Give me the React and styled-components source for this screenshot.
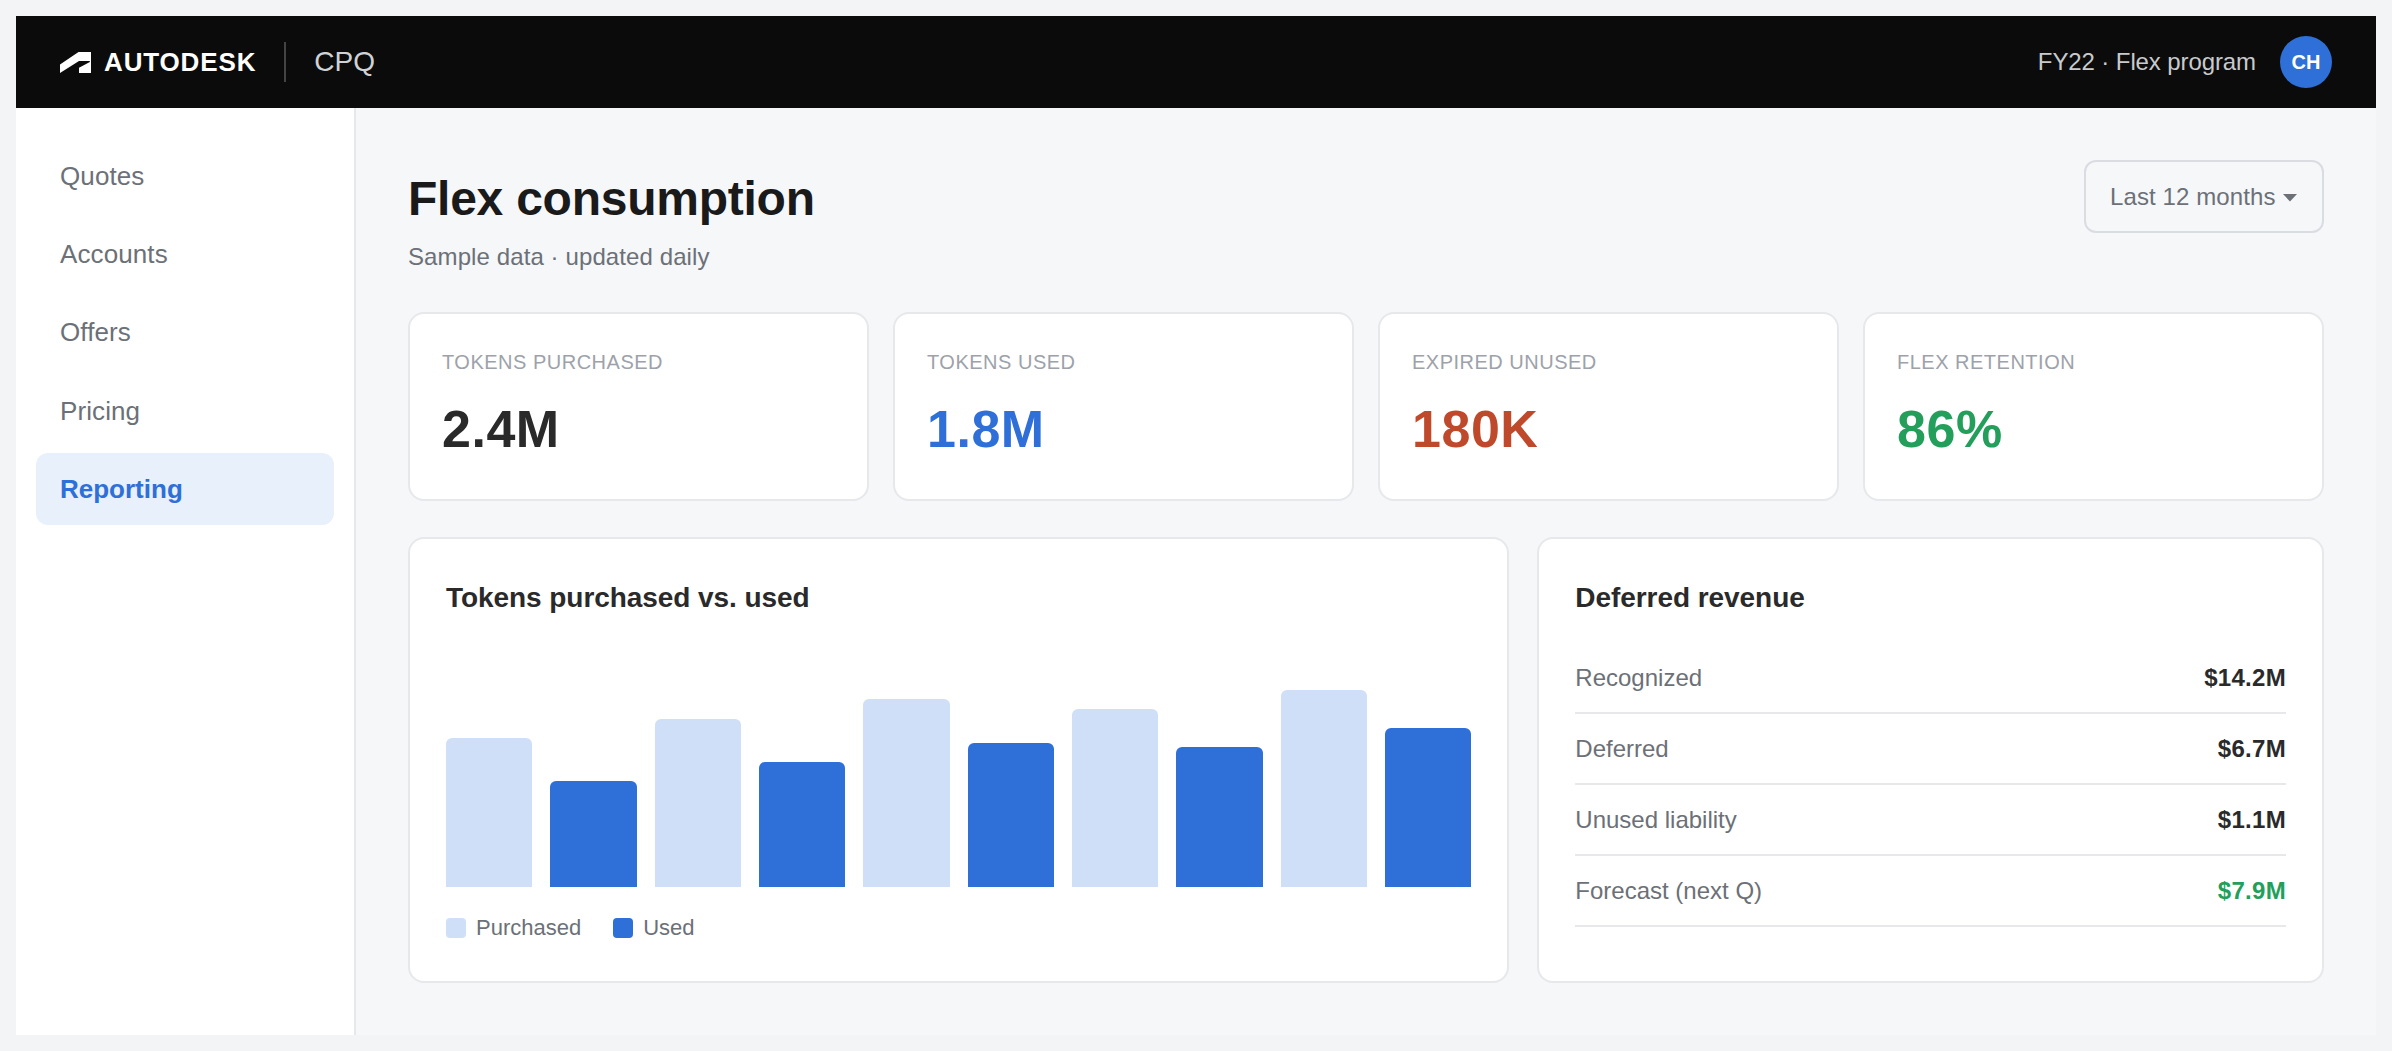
import React from 'react';
import styled, { createGlobalStyle } from 'styled-components';

const colors = {
  blue: '#2f6fd8',
  lightBlue: '#cfdff7',
  red: '#bf4a2b',
  green: '#239f5b',
  dark: '#2a2a2a',
  grey: '#6c7077',
  border: '#e6e8eb'
};

const GlobalStyle = createGlobalStyle`
  * {
    box-sizing: border-box;
  }

  body {
    margin: 0;
    background: #f3f4f6;
    font-family: "Liberation Sans", Helvetica, Arial, sans-serif;
    -webkit-font-smoothing: antialiased;
  }
`;

const Page = styled.div`
  height: 1051px;
  padding: 16px;
`;

const Window = styled.div`
  display: flex;
  flex-direction: column;
  height: 1019px;
  background: #f5f7f9;
`;

const Header = styled.header`
  display: flex;
  align-items: center;
  height: 92px;
  flex: none;
  padding: 0 44px;
  background: #0b0b0b;
`;

const Logo = styled.svg`
  width: 31px;
  height: 21px;
  margin-right: 13px;
  fill: #fff;
`;

const Brand = styled.span`
  color: #fff;
  font-size: 26px;
  font-weight: 700;
  letter-spacing: .033em;
`;

const Divider = styled.span`
  width: 2px;
  height: 40px;
  margin: 0 28px;
  background: #444;
`;

const Product = styled.span`
  color: #d0d2d6;
  font-size: 28px;
`;

const Program = styled.span`
  margin-left: auto;
  margin-right: 24px;
  color: #c8cacd;
  font-size: 24px;
  letter-spacing: -.1px;
`;

const Avatar = styled.span`
  display: flex;
  align-items: center;
  justify-content: center;
  width: 52px;
  height: 52px;
  border-radius: 50%;
  background: ${colors.blue};
  color: #fff;
  font-size: 20px;
  font-weight: 700;
`;

const Body = styled.div`
  display: flex;
  flex: 1;
`;

const Sidebar = styled.nav`
  display: flex;
  flex-direction: column;
  gap: 6px;
  width: 340px;
  padding: 32px 20px;
  border-right: 2px solid ${colors.border};
  background: #fff;
`;

const NavItem = styled.a`
  display: flex;
  align-items: center;
  height: 72.3px;
  padding: 0 24px;
  border-radius: 12px;
  background: ${props => props.$active ? "#e8f0fc" : "transparent"};
  color: ${props => props.$active ? colors.blue : colors.grey};
  font-size: 26px;
  font-weight: ${props => props.$active ? 700 : 400};
  letter-spacing: ${props => props.$active ? 0 : ".1px"};
`;

const Main = styled.main`
  flex: 1;
  padding: 52px;
`;

const TitleRow = styled.div`
  display: flex;
  justify-content: space-between;
  align-items: flex-start;
  height: 152px;
`;

const Title = styled.h1`
  margin: 11px 0 0;
  color: #1a1a1a;
  font-size: 48px;
  line-height: 56px;
  letter-spacing: -.25px;
`;

const Subtitle = styled.p`
  margin: 15px 0 0;
  color: ${colors.grey};
  font-size: 24px;
  line-height: 30px;
  letter-spacing: .1px;
`;

const RangeButton = styled.button`
  display: flex;
  align-items: center;
  justify-content: space-between;
  width: 240px;
  height: 73px;
  padding: 0 25px 0 24px;
  border: 2px solid #d9dce1;
  border-radius: 12px;
  background: transparent;
  color: ${colors.grey};
  font-family: inherit;
  font-size: 24px;
  letter-spacing: .1px;
`;

const Caret = styled.svg`
  width: 14px;
  height: 8px;
  margin-top: 3px;
  fill: ${colors.grey};
`;

const Stats = styled.div`
  display: grid;
  grid-template-columns: repeat(4, 1fr);
  gap: 24px;
`;

const Card = styled.section`
  border: 2px solid ${colors.border};
  border-radius: 16px;
  background: #fff;
`;

const StatCard = styled(Card)`
  height: 189px;
  padding: 34px 32px;
`;

const StatLabel = styled.div`
  color: #9da2aa;
  font-size: 20px;
  line-height: 28px;
  letter-spacing: .5px;
  text-transform: uppercase;
`;

const StatValue = styled.div`
  margin-top: 23px;
  color: ${props => props.color};
  font-size: 52px;
  font-weight: 700;
  line-height: 60px;
  letter-spacing: .01em;
`;

const Panels = styled.div`
  display: grid;
  grid-template-columns: 1.4fr 1fr;
  gap: 28px;
  margin-top: 36px;
`;

const Panel = styled(Card)`
  height: 446px;
  padding: 41px 36px 40px;
`;

const PanelTitle = styled.h2`
  margin: 0;
  color: ${colors.dark};
  font-size: 28px;
  line-height: 36px;
  letter-spacing: -.06px;
`;

const Chart = styled.div`
  display: flex;
  align-items: flex-end;
  gap: 18px;
  height: 240px;
  margin-top: 30.6px;
`;

const Bar = styled.div`
  flex: 1;
  border-radius: 6px 6px 0 0;
  background: ${props => props.$used ? colors.blue : colors.lightBlue};
`;

const Legend = styled.div`
  display: flex;
  gap: 32px;
  margin-top: 28.4px;
`;

const LegendItem = styled.span`
  display: flex;
  align-items: center;
  gap: 10px;
  color: ${colors.grey};
  font-size: 22px;
  line-height: 26px;
`;

const Swatch = styled.span`
  width: 20px;
  height: 20px;
  border-radius: 4px;
  background: ${props => props.color};
`;

const Rows = styled.div`
  margin-top: 27px;
`;

const Row = styled.div`
  display: flex;
  justify-content: space-between;
  padding: 20px 0;
  border-bottom: 2px solid ${colors.border};
  color: ${colors.grey};
  font-size: 24px;
  line-height: 29px;
`;

const Amount = styled.strong`
  color: ${props => props.color || colors.dark};
  letter-spacing: .3px;
`;

const navItems = ['Quotes', 'Accounts', 'Offers', 'Pricing', 'Reporting'];

const stats = [
  { label: 'Tokens purchased', value: '2.4M', color: colors.dark },
  { label: 'Tokens used', value: '1.8M', color: colors.blue },
  { label: 'Expired unused', value: '180K', color: colors.red },
  { label: 'Flex retention', value: '86%', color: colors.green }
];

// purchased and used alternate, in percent of the chart height
const bars = [62, 44, 70, 52, 78, 60, 74, 58, 82, 66];

const revenue = [
  { label: 'Recognized', amount: '$14.2M' },
  { label: 'Deferred', amount: '$6.7M' },
  { label: 'Unused liability', amount: '$1.1M' },
  { label: 'Forecast (next Q)', amount: '$7.9M', color: colors.green }
];

const TopBar = () => (
  <Header>
    <Logo viewBox="0 0 31 21">
      <path d="M0 12.5 L18.5 0 H31 V21 H19 V15.8 L29.8 10 V9 H19 L0 21 Z" />
    </Logo>
    <Brand>AUTODESK</Brand>
    <Divider />
    <Product>CPQ</Product>
    <Program>FY22 · Flex program</Program>
    <Avatar>CH</Avatar>
  </Header>
);

const UsagePanel = () => (
  <Panel>
    <PanelTitle>Tokens purchased vs. used</PanelTitle>
    <Chart>
      {bars.map((height, i) => <Bar key={i} $used={i % 2 === 1} style={{ height: height + '%' }} />)}
    </Chart>
    <Legend>
      <LegendItem><Swatch color={colors.lightBlue} />Purchased</LegendItem>
      <LegendItem><Swatch color={colors.blue} />Used</LegendItem>
    </Legend>
  </Panel>
);

const RevenuePanel = () => (
  <Panel>
    <PanelTitle>Deferred revenue</PanelTitle>
    <Rows>
      {revenue.map(({ label, amount, color }) => (
        <Row key={label}>
          <span>{label}</span>
          <Amount color={color}>{amount}</Amount>
        </Row>
      ))}
    </Rows>
  </Panel>
);

const App = () => (
  <Page>
    <GlobalStyle />
    <Window>
      <TopBar />
      <Body>
        <Sidebar>
          {navItems.map(item => <NavItem key={item} $active={item === 'Reporting'}>{item}</NavItem>)}
        </Sidebar>
        <Main>
          <TitleRow>
            <div>
              <Title>Flex consumption</Title>
              <Subtitle>Sample data · updated daily</Subtitle>
            </div>
            <RangeButton>
              Last 12 months
              <Caret viewBox="0 0 14 8"><path d="M0 0 H14 L7 7.5 Z" /></Caret>
            </RangeButton>
          </TitleRow>
          <Stats>
            {stats.map(({ label, value, color }) => (
              <StatCard key={label}>
                <StatLabel>{label}</StatLabel>
                <StatValue color={color}>{value}</StatValue>
              </StatCard>
            ))}
          </Stats>
          <Panels>
            <UsagePanel />
            <RevenuePanel />
          </Panels>
        </Main>
      </Body>
    </Window>
  </Page>
);

export default App;
